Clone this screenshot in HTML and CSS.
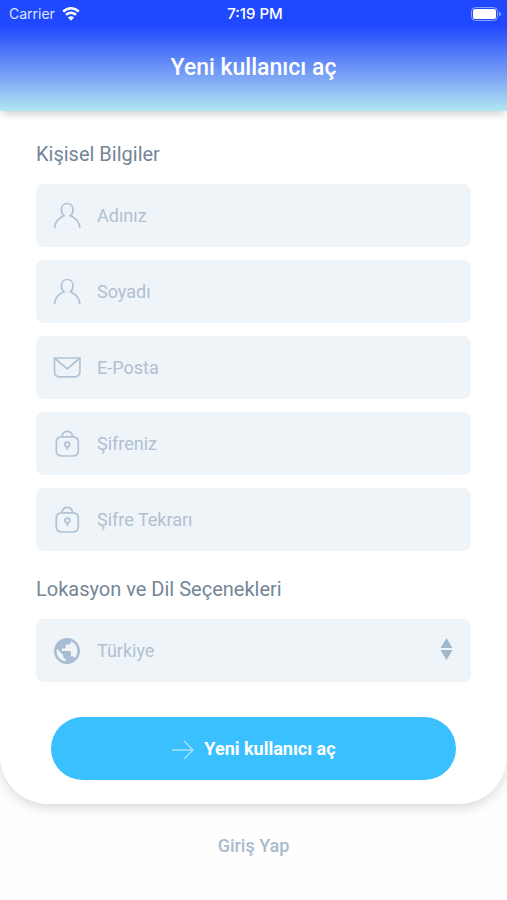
FILE: index.html
```html
<!DOCTYPE html>
<html lang="tr">
<head>
<meta charset="utf-8">
<meta name="viewport" content="width=device-width, initial-scale=1">
<title>Yeni kullanıcı aç</title>
<link rel="stylesheet" href="styles.css">
</head>
<body>
<svg class="sprite" aria-hidden="true">
  <symbol id="user" viewBox="0 0 28 28"><path d="M1.500 26C2 20.500 5.500 16 11 13.800C9 12.400 8.400 10.600 8.400 7.800C8.400 4 10.800 1.500 14.200 1.500S20 4 20 7.800C20 10.600 19.400 12.400 17.400 13.800C22.900 16 26.400 20.500 26.900 26"/></symbol>
  <symbol id="mail" viewBox="0 0 28 28"><path d="M1.500 4H26.900V17.500Q26.900 22.800 21.600 22.800H6.800Q1.500 22.800 1.500 17.500ZM1.500 4L14.200 14.800L26.900 4"/></symbol>
  <symbol id="lock" viewBox="0 0 28 28"><path d="M8.800 6.800H19.800Q25.300 6.800 25.300 12.300V20.500Q25.300 26 19.800 26H8.800Q3.300 26 3.300 20.500V12.300Q3.300 6.800 8.800 6.800ZM8.900 6.600C9.500 3.200 11.500 1.400 14.300 1.400S19.100 3.200 19.700 6.600"/><circle cx="14.300" cy="14.500" r="2.400"/><path d="M14.300 17V20"/></symbol>
  <symbol id="globe" viewBox="2 2 20 20"><path d="M12 2C6.480 2 2 6.480 2 12s4.480 10 10 10 10-4.480 10-10S17.520 2 12 2zm-1 17.930c-3.950-.49-7-3.850-7-7.930 0-.62.080-1.210.210-1.790L9 15v1c0 1.100.9 2 2 2v1.930zm6.900-2.540c-.26-.81-1-1.390-1.900-1.390h-1v-3c0-.55-.45-1-1-1H8v-2h2c.55 0 1-.45 1-1V7h2c1.100 0 2-.9 2-2v-.41c2.930 1.190 5 4.060 5 7.410 0 2.080-.8 3.970-2.100 5.390z"/></symbol>
</svg>

<main class="card">
  <header class="header">
    <div class="status">
      <div class="status-left">
        <span>Carrier</span>
        <svg class="wifi" viewBox="0 0 18 14" aria-hidden="true"><path class="wifi-arc" d="M1.200 4.500Q9 -2 16.800 4.500M4 7.700Q9 3.700 14 7.700"/><path class="wifi-dot" d="M6 10.500Q9 8 12 10.500L9 13.800Z"/></svg>
      </div>
      <span class="time">7:19 PM</span>
      <div class="status-right">
        <svg class="battery" viewBox="0 0 30 14" aria-hidden="true"><rect class="battery-case" x="0.500" y="0.500" width="26" height="13" rx="4"/><rect class="battery-fill" x="2" y="2" width="23" height="10" rx="2"/><path class="battery-tip" d="M28 4.500Q30 5.500 30 7T28 9.500Z"/></svg>
      </div>
    </div>
    <h1 class="title">Yeni kullanıcı aç</h1>
  </header>

  <form class="form">
    <h2 class="section">Kişisel Bilgiler</h2>
    <div class="fields">
      <label class="field"><svg class="icon"><use href="#user"/></svg><input class="control" type="text" placeholder="Adınız" aria-label="Adınız"></label>
      <label class="field"><svg class="icon"><use href="#user"/></svg><input class="control" type="text" placeholder="Soyadı" aria-label="Soyadı"></label>
      <label class="field"><svg class="icon"><use href="#mail"/></svg><input class="control" type="email" placeholder="E-Posta" aria-label="E-Posta"></label>
      <label class="field"><svg class="icon"><use href="#lock"/></svg><input class="control" type="password" placeholder="Şifreniz" aria-label="Şifreniz"></label>
      <label class="field"><svg class="icon"><use href="#lock"/></svg><input class="control" type="password" placeholder="Şifre Tekrarı" aria-label="Şifre Tekrarı"></label>
    </div>
    <h2 class="section section-next">Lokasyon ve Dil Seçenekleri</h2>
    <label class="field">
      <svg class="icon icon-solid"><use href="#globe"/></svg>
      <select class="control" aria-label="Ülke"><option>Türkiye</option></select>
      <svg class="sorter" viewBox="0 0 14 26" aria-hidden="true"><path d="M7.500 0L13.500 10H1.500ZM1.500 12H13.500L7.500 22Z"/></svg>
    </label>
    <button class="submit" type="submit">
      <svg class="arrow" viewBox="0 0 24 20" aria-hidden="true"><path d="M1 11H22M13 2L22 11L13 20"/></svg>
      <span>Yeni kullanıcı aç</span>
    </button>
  </form>
</main>
<footer class="footer"><a class="login" href="#login">Giriş Yap</a></footer>
</body>
</html>
```
FILE: styles.css
```css
* {
  box-sizing: border-box;
}

body {
  margin: 0;
  background: #fefefe;
  font-family: Roboto, "Liberation Sans", sans-serif;
}

.sprite {
  display: none;
}

.card {
  border-radius: 0 0 48px 48px;
  background: #fff;
  box-shadow: 0 4px 12px rgba(0, 0, 0, 0.14);
}

.header {
  height: 111px;
  background: linear-gradient(#2048ff 26px, #5078f9 52px, #84adf5 82px, #b0e8f1 111px);
  box-shadow: 0 5px 8px -2px rgba(0, 0, 0, 0.2);
  color: #fff;
}

.status {
  display: grid;
  grid-template-columns: 1fr auto 1fr;
  align-items: center;
  height: 28px;
  padding: 0 6px 0 9px;
  font: 14px/20px Inter, sans-serif;
}

.status-left {
  display: flex;
  align-items: center;
  gap: 7px;
  color: #dfe6ff;
}

.status-right {
  display: flex;
  justify-content: flex-end;
}

.time {
  font-size: 15px;
  font-weight: 500;
}

.wifi {
  width: 18px;
  height: 14px;
}

.wifi-arc {
  fill: none;
  stroke: #fff;
  stroke-width: 2.5;
}

.wifi-dot,
.battery-fill {
  fill: #fff;
}

.battery {
  width: 30px;
  height: 14px;
}

.battery-case {
  fill: none;
  stroke: #8da3ff;
}

.battery-tip {
  fill: #8da3ff;
}

.title {
  margin: 0;
  padding-top: 26px;
  font-size: 23px;
  font-weight: 500;
  line-height: 28px;
  text-align: center;
}

.form {
  padding: 31px 36px 24px;
}

.section {
  margin: 0 0 18px;
  color: #748697;
  font-size: 20px;
  font-weight: 400;
  line-height: 24px;
}

.section-next {
  margin-top: 26px;
}

.fields {
  display: grid;
  gap: 13px;
}

.field {
  display: flex;
  align-items: center;
  gap: 16px;
  height: 63px;
  padding: 0 18px 0 17px;
  border-radius: 8px;
  background: #eff4f8;
}

.icon {
  flex: none;
  width: 28px;
  height: 28px;
  fill: none;
  stroke: #b0c3d5;
  stroke-width: 1.7;
}

.icon-solid {
  padding: 1px;
  fill: #a8bdd1;
  stroke: none;
}

.control {
  flex: 1;
  min-width: 0;
  padding: 0;
  border: 0;
  outline: 0;
  background: transparent;
  color: #b0c1d2;
  font: 18px/24px Roboto, sans-serif;
  appearance: none;
}

.control::placeholder {
  color: #b0c1d2;
}

.sorter {
  width: 14px;
  height: 26px;
  fill: #a0b6ca;
}

.submit {
  display: flex;
  align-items: center;
  justify-content: center;
  gap: 9px;
  width: calc(100% - 30px);
  height: 63px;
  margin: 35px auto 0;
  border: 0;
  border-radius: 32px;
  background: #3bc0ff;
  color: #fff;
  font: 700 18px/24px Roboto, sans-serif;
}

.arrow {
  width: 24px;
  height: 20px;
  overflow: visible;
  fill: none;
  stroke: #a5e3ff;
  stroke-width: 1.3;
}

.footer {
  padding: 30px 0;
  text-align: center;
}

.login {
  color: #aabbce;
  font-size: 18px;
  font-weight: 500;
  line-height: 24px;
  text-decoration: none;
}
```
